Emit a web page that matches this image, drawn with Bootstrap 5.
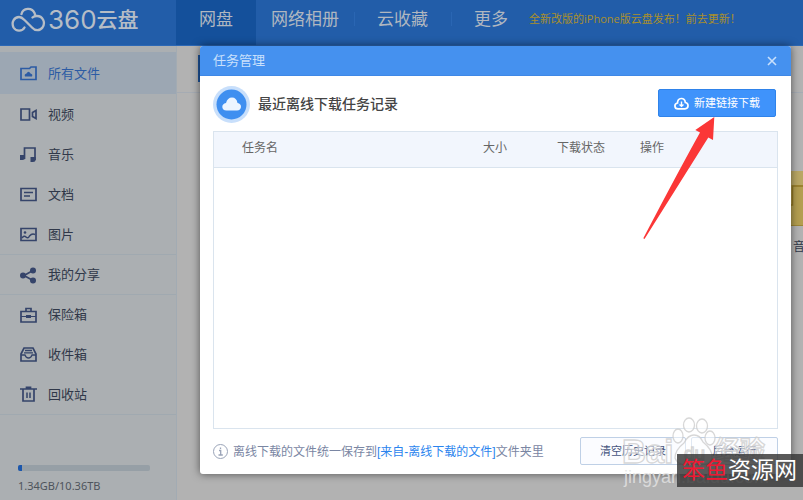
<!DOCTYPE html>
<html lang="zh-CN">
<head>
<meta charset="utf-8">
<meta name="viewport" content="width=device-width, initial-scale=1">
<title>360云盘</title>
<link rel="stylesheet" href="https://cdn.jsdelivr.net/npm/bootstrap@5.3.0/dist/css/bootstrap.min.css">
<style>
body { font-family: "Liberation Sans", "Noto Sans CJK SC", sans-serif; font-size: 13px; line-height: 20px; background: #b2b2b2; color: #303849; overflow: hidden; }
a { text-decoration: none; color: inherit; }
.topbar { background: #225da9; height: 46px; color: #b6bdc6; border-bottom: 1px solid #2c68b6; }
.brand-area { width: 176px; padding-left: 11px; padding-bottom: 5px; }
.brand-num { font: 400 26px/30px Inter, sans-serif; margin-left: 2px; }
.brand-cjk { font-size: 21px; line-height: 30px; font-weight: 500; }
.tab-link { font-size: 17px; line-height: 24px; padding: 8px 23px 13px; color: #b0b7c0; }
.tab-wide { padding-left: 15px; padding-right: 15px; }
.tab-on { background: #14509b; }
.tab-rule { width: 1px; height: 14px; margin: 12px 0; background: #2a66b3; margin-right: -1px; }
.promo { font: 11px/20px "Open Sans", "Noto Sans CJK SC", sans-serif; color: #a98f2b; padding-bottom: 7px; margin-left: -2px; }
.side { width: 177px; background: #abafb2; border-right: 1px solid #a2abb3; padding-top: 6px; }
.side-link { height: 40px; padding: 1px 0 0 20px; gap: 11px; }
.side-link svg { width: 17px; height: 17px; fill: none; stroke: #35446a; stroke-width: 2; }
.side-on { background: #9ca7b3; color: #2c5ba4; height: 42px; }
.side-on svg { stroke: #2c5ba4; }
.side-sep { border-top: 1px solid #a0a9b0; }
.quota { padding: 50px 26px 0 18px; font: 11px/16px "Noto Sans", sans-serif; color: #4e545c; }
.quota .progress { height: 6px; border-radius: 2px; background: #969fa6; margin-bottom: 7px; }
.quota .progress-bar { background: #1c57ac; }
.stage-bar { height: 47px; border-bottom: 1px solid #a5abb3; padding: 9px 0 0 21px; }
.stage-btn { width: 90px; height: 27px; border: 0; background: #1d539a; }
.file-tile { width: 24px; padding-top: 78px; margin-right: -12px; }
.file-tile svg { width: 24px; height: 55px; }
.file-tile span { font-size: 12px; padding-left: 2px; margin-top: 11px; white-space: nowrap; }
.dialog { left: 200px; right: 12px; top: 46px; background: #fff; border-radius: 3px; box-shadow: 0 0 8px rgba(0,0,0,.55); color: #555; }
.dialog-head { height: 30px; background: #4591ef; color: #c9e0fc; padding: 0 13px; border-radius: 3px 3px 0 0; border-bottom: 1px solid #3f88e6; }
.close-x { border: 0; background: none; padding: 0; width: 12px; line-height: 0; color: #c9e0fc; }
.dialog-body { padding: 10px 13px 9px; }
.dialog-title { font: 500 14px/20px "Noto Sans CJK SC", sans-serif; color: #444; padding-bottom: 4px; }
.new-btn { width: 118px; height: 28px; padding: 0; background: #3f93fb; border: 1px solid #2f83ea; border-radius: 2px; color: #fff; font-size: 11px; gap: 5px; margin: 0 2px 3px 0; }
.new-btn:hover { background: #3f93fb; color: #fff; }
.task-box { margin-top: 8px; height: 298px; border: 1px solid #dae4ee; }
.task-table { table-layout: fixed; font-size: 12px; }
.task-table th { height: 35px; padding: 6px 0 8px; background: #f2f6fd; color: #666; font-weight: 400; border-bottom: 1px solid #dae4ee; }
.task-table th:first-child { padding-left: 28px; }
.c-size { width: 74px; } .c-state { width: 83px; } .c-op { width: 137px; }
.foot-row { margin-top: 8px; font-size: 12px; color: #7a86a3; gap: 5px; }
.foot-note { padding-top: 2px; }
.foot-row a { color: #2a84ee; }
.soft-btn { height: 28px; padding: 0; font-size: 11px; line-height: 26px; color: #46557e; background: #fbfcff; border: 1px solid #bfd0e6; border-radius: 2px; }
.b-wide { width: 106px; } .b-slim { width: 87px; }
.pointer-arrow { right: 74px; top: 69px; width: 77px; height: 126px; pointer-events: none; }
.wm { right: 30px; bottom: 8px; width: 156px; height: 80px; pointer-events: none; }
.stamp { right: 0; bottom: 13px; width: 126px; height: 33px; background: rgba(55,55,55,.83); color: #fff; font-size: 23px; line-height: 33px; padding-left: 5px; white-space: nowrap; }
.stamp b { font-weight: 400; color: #f01832; }
</style>
<script src="https://cdn.jsdelivr.net/npm/bootstrap@5.3.0/dist/js/bootstrap.bundle.min.js"></script>
</head>
<body class="d-flex flex-column vh-100 position-relative">
<header class="topbar d-flex flex-shrink-0">
  <a href="#" class="brand-area d-flex align-items-center">
    <svg width="35" height="26" viewBox="0 0 35 26" fill="none" stroke="#b6bdc6" stroke-width="2.3" stroke-linecap="round"><path d="M13.500 20.500C11 25 5 24.500 2.500 20.500C0 15 3.500 10 8 10C11 10 12.500 12 14 13.500L21 20.500C24 24 29 24 31.500 20.500C35 15 31.500 9 26 9C24 9 22.500 9.500 21.500 10.500M10.500 7C12 0.500 21 0 23.500 6L24.500 9"/></svg>
    <span class="brand-num">360</span><span class="brand-cjk">云盘</span>
  </a>
  <nav class="d-flex">
    <a href="#" class="tab-link tab-on">网盘</a>
    <a href="#" class="tab-link tab-wide">网络相册</a><span class="tab-rule"></span>
    <a href="#" class="tab-link">云收藏</a><span class="tab-rule"></span>
    <a href="#" class="tab-link">更多</a>
  </nav>
  <a href="#" class="promo align-self-center text-nowrap">全新改版的iPhone版云盘发布！前去更新！</a>
</header>
<div class="d-flex flex-grow-1">
  <aside class="side flex-shrink-0">
    <nav>
      <a href="#" class="side-link side-on d-flex align-items-center"><svg viewBox="0 0 17 17"><path d="M1 3.500H9.500L11 2H16V14.500H1Z" stroke-width="1.700"/><path d="M5 11.500Q4 9 6.500 8.500Q8.500 5 10.500 8.500Q13 9 12 11.500Z" fill="#2c5ba4" stroke="none"/></svg>所有文件</a>
      <a href="#" class="side-link d-flex align-items-center"><svg viewBox="0 0 17 17"><path d="M1 3H9.500V14H1ZM16 4.500V12.500L12.500 10.500V6.500Z" stroke-width="1.700"/></svg>视频</a>
      <a href="#" class="side-link d-flex align-items-center"><svg viewBox="0 0 17 17"><path d="M4.500 13V2H15V14" stroke-width="1.700"/><path d="M0 9H5V12Q5 14 2.500 14H0ZM10.500 11H15.700V14Q15.500 16 13 16H10.500Z" fill="#35446a" stroke="none"/></svg>音乐</a>
      <a href="#" class="side-link d-flex align-items-center"><svg viewBox="0 0 17 17"><path d="M1 2.500H16V14.500H1Z" stroke-width="1.700"/><path d="M4 6.500H13M4 10H10" stroke-width="1.500"/></svg>文档</a>
      <a href="#" class="side-link d-flex align-items-center"><svg viewBox="0 0 17 17"><path d="M1 2.500H16V14.500H1Z" stroke-width="1.700"/><path d="M2 12Q4 9 6 11T9.500 10Q12 7 15 8.500" stroke-width="1.500"/><circle cx="5" cy="6.500" r="1.300" fill="#35446a" stroke="none"/></svg>图片</a>
      <a href="#" class="side-link side-sep d-flex align-items-center"><svg viewBox="0 0 17 17"><path d="M13 3.500L4 8.500L13 13.500" stroke-width="1.700"/><g fill="#35446a" stroke="none"><circle cx="3" cy="8.500" r="3"/><circle cx="13" cy="3.500" r="3"/><circle cx="13" cy="13.500" r="3"/></g></svg>我的分享</a>
      <a href="#" class="side-link side-sep d-flex align-items-center"><svg viewBox="0 0 17 17"><path d="M1 4.500H16V15H1ZM6 4V1.500H11V4" stroke-width="1.700"/><path d="M1 9.500H16" stroke-width="1"/><path d="M6 8H11V11H6Z" fill="#35446a" stroke="none"/></svg>保险箱</a>
      <a href="#" class="side-link d-flex align-items-center"><svg viewBox="0 0 17 17"><path d="M1 8L4 2H13L16 8V15H1Z" stroke-width="1.700"/><path d="M1 9H5Q6 12 8.500 12T12 9H16M5 4.500H12M4 6.800H13" stroke-width="1.300"/></svg>收件箱</a>
      <a href="#" class="side-link d-flex align-items-center"><svg viewBox="0 0 17 17"><path d="M0 3H17M3 3V15H14V3M6.500 3V1.300H10.500V3" stroke-width="1.700"/><path d="M7 6.500V12M10 6.500V12" stroke-width="1.500"/></svg>回收站</a>
    </nav>
    <div class="quota side-sep">
      <div class="progress" role="progressbar" aria-label="容量" aria-valuenow="3" aria-valuemin="0" aria-valuemax="100"><div class="progress-bar" style="width:3%"></div></div>
      1.34GB/10.36TB
    </div>
  </aside>
  <main class="flex-grow-1">
    <div class="stage-bar"><button type="button" class="stage-btn" aria-label="上传"></button></div>
    <div class="file-tile ms-auto d-flex flex-column">
      <svg viewBox="0 0 24 55"><path d="M0 0H24V55H0Z" fill="#b39e50"/><path d="M0 0H24V14H0Z" fill="#b9a764"/><path d="M-3 34H1.500V15H24" fill="none" stroke="#947a24" stroke-width="1.500"/><path d="M0 54.500H24" stroke="#9d8636"/></svg>
      <span>音</span>
    </div>
  </main>
</div>

<section class="dialog position-absolute" role="dialog" aria-labelledby="dlg-name">
  <div class="dialog-head d-flex align-items-center justify-content-between">
    <span id="dlg-name">任务管理</span>
    <button type="button" class="close-x" aria-label="关闭"><svg width="10" height="10" viewBox="0 0 10 10" stroke="currentColor" stroke-width="1.600"><path d="M1 1L9 9M9 1L1 9"/></svg></button>
  </div>
  <div class="dialog-body">
    <div class="d-flex align-items-center">
      <svg width="37" height="37" viewBox="0 0 37 37"><circle cx="18.500" cy="18.500" r="18.500" fill="#c8dffb"/><circle cx="18.500" cy="18.500" r="15" fill="#3f8ff0"/><path d="M13.500 24.500C8 24.500 8 17.500 13 17Q14.500 11.500 19 11.500T24.500 17C29.500 17.500 29 24.500 24 24.500Z" fill="#edf5ff"/></svg>
      <h1 class="dialog-title mb-0 ms-2">最近离线下载任务记录</h1>
      <button type="button" class="new-btn btn ms-auto d-flex align-items-center justify-content-center">
        <svg width="15" height="13" viewBox="0 0 15 13" fill="none" stroke="#fff" stroke-width="1.700"><path d="M4 11.800C0 11.800 0 6.500 3.500 6C3.500 .5 11 -.3 11.300 5.500C15 6 15 11.800 11 11.800Z"/><path d="M7.500 4.500V8.500M5.500 7.500L7.500 9.300L9.500 7.500" stroke-width="1.400"/></svg>新建链接下载
      </button>
    </div>
    <div class="task-box">
      <table class="task-table w-100">
        <thead><tr><th scope="col">任务名</th><th scope="col" class="c-size">大小</th><th scope="col" class="c-state">下载状态</th><th scope="col" class="c-op">操作</th></tr></thead>
        <tbody></tbody>
      </table>
    </div>
    <div class="foot-row d-flex align-items-center">
      <svg width="15" height="15" viewBox="0 0 15 15" fill="none" stroke="#9aa4b8"><circle cx="7.500" cy="7.500" r="7"/><path d="M7.500 3.500V5M6 6.500H7.700V11M5.500 11H9.800" stroke-width="1.300"/></svg>
      <span class="foot-note text-nowrap">离线下载的文件统一保存到<a href="#">[来自-离线下载的文件]</a>文件夹里</span>
      <button type="button" class="soft-btn b-wide ms-auto">清空历史记录</button>
      <button type="button" class="soft-btn b-slim">后台运行</button>
    </div>
  </div>
  <svg class="pointer-arrow position-absolute" viewBox="640 115 77 126" aria-hidden="true"><path d="M714.300 117L695.300 130L700 132.500Q678 172 643.300 238.300L644.500 239L708.300 137.500L713 140Z" fill="#fb3737"/></svg>
</section>

<svg class="wm position-absolute" viewBox="617 412 156 80" aria-hidden="true">
  <g fill="#fff" fill-opacity=".5" stroke="#cdcdcd" stroke-opacity=".8" stroke-width="1.300" font-family="Liberation Sans, Noto Sans CJK SC, sans-serif">
    <text x="622" y="463" font-size="33" font-weight="700">Bai</text>
    <ellipse cx="678" cy="436" rx="5" ry="7"/><ellipse cx="689" cy="425" rx="5.500" ry="7"/><ellipse cx="702" cy="426" rx="5.500" ry="7"/><ellipse cx="710" cy="438" rx="5" ry="7"/>
    <path d="M694 435Q700 435 703 442Q713 450 712 458Q710 467 694 464Q678 467 675 458Q675 450 684 443Q688 435 694 435Z"/>
    <text x="684" y="460" font-size="19">du</text>
    <text x="715" y="459" font-size="25" font-weight="700">经验</text>
  </g>
  <text x="624" y="483" font-size="18" fill="#e2e2e2" fill-opacity=".85" font-family="Liberation Sans, sans-serif">jingyan.baidu.com</text>
</svg>
<div class="stamp position-absolute"><b>笨鱼</b>资源网</div>
</body>
</html>
